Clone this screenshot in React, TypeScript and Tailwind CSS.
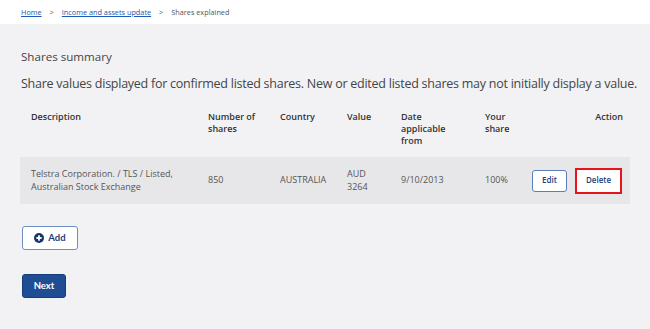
import React from 'react';

const headers = [
  { label: 'Description', cls: 'pl-[11px]' },
  { label: 'Number of shares', cls: 'pl-[10px] pr-[6px]' },
  { label: 'Country', cls: 'pl-[10px]' },
  { label: 'Value', cls: 'pl-[10px]' },
  { label: 'Date applicable from', cls: 'pl-[10px] pr-6' },
  { label: 'Your share', cls: 'pl-[10px] pr-2' },
];

const gridCols = 'grid grid-cols-[178px_72px_67px_54px_84px_47px_109px]';

const App = () => {
  return (
    <div
      className="w-[650px] h-[329px] bg-[#f2f2f4] text-[#444]"
      style={{ fontFamily: '"Open Sans", "Noto Sans", sans-serif' }}
    >
      <div className="h-[24px] bg-white flex items-center pl-[21px] gap-[8px] text-[7.3px] text-[#555]">
        <a className="text-[#2059b3] underline">Home</a>
        <span>&gt;</span>
        <a className="text-[#2059b3] underline">Income and assets update</a>
        <span>&gt;</span>
        <span>Shares explained</span>
      </div>

      <div className="px-[20px] pt-[24px]">
        <h1 className="pl-[1px] text-[11.6px] leading-[18px] text-[#444]">Shares summary</h1>
        <p className="pl-[1px] mt-[8px] whitespace-nowrap text-[12.5px] tracking-[-0.25px] leading-[20px] text-[#444]">
          Share values displayed for confirmed listed shares. New or edited listed shares may not initially display a value.
        </p>

        <div className={`${gridCols} mt-[10px] h-[53px] pt-[7px] text-[9px] leading-[12px] font-semibold text-[#333]`}>
          {headers.map(h => (
            <div key={h.label} className={h.cls}>
              {h.label}
            </div>
          ))}
          <div className="text-right pr-[8px]">Action</div>
        </div>

        <div className={`${gridCols} h-[47px] bg-[#e7e7e9] items-center text-[9px] leading-[12.5px] text-[#555]`}>
          <div className="pl-[11px]">
            Telstra Corporation. / TLS / Listed,
            <br />
            Australian Stock Exchange
          </div>
          <div className="pl-[10px]">850</div>
          <div className="pl-[10px]">AUSTRALIA</div>
          <div className="pl-[10px]">
            AUD
            <br />
            3264
          </div>
          <div className="pl-[10px]">9/10/2013</div>
          <div className="pl-[10px] self-start pt-[17px]">100%</div>
          <div className="flex items-center pl-[10px] gap-[8px]">
            <button className="w-[35px] h-[22px] bg-white border border-[#5b7fb8] rounded-[3px] text-[8px] font-semibold text-[#1d3f7a]">
              Edit
            </button>
            <button className="w-[47px] h-[26px] bg-white border-[2.5px] border-[#e8141c] text-[8px] font-semibold text-[#1d3f7a]">
              Delete
            </button>
          </div>
        </div>

        <button
          className="mt-[22px] ml-[2px] w-[56px] h-[24px] bg-white border border-[#6d8fc4] rounded-[3px] flex items-center justify-center gap-[4px] text-[9.5px] font-bold text-[#1d3f7a]"
          style={{ fontFamily: 'Lato, sans-serif' }}
        >
          <svg width="10" height="10" viewBox="0 0 10 10">
            <circle cx="5" cy="5" r="5" fill="#16356c" />
            <rect x="2.3" y="4.1" width="5.4" height="1.8" fill="white" />
            <rect x="4.1" y="2.3" width="1.8" height="5.4" fill="white" />
          </svg>
          Add
        </button>

        <button
          className="mt-[24px] ml-[2px] w-[44px] h-[24px] bg-[#1e4d94] border border-[#163c78] rounded-[3px] text-[9.5px] font-bold text-white"
          style={{ fontFamily: 'Lato, sans-serif' }}
        >
          Next
        </button>
      </div>
    </div>
  );
};

export default App;
